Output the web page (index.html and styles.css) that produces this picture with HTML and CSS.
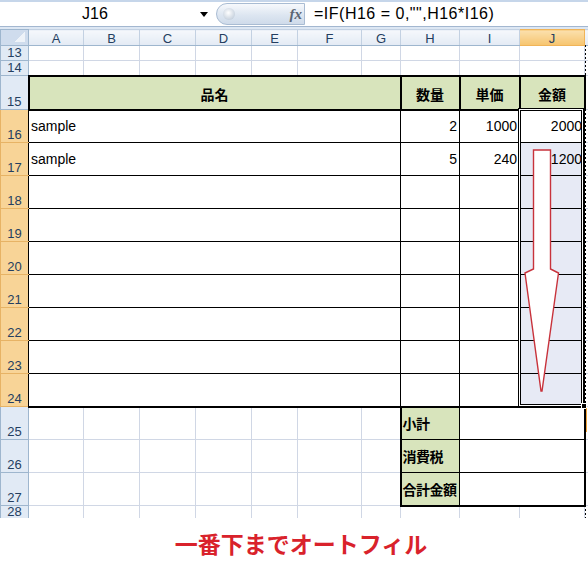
FILE: index.html
```html
<!DOCTYPE html>
<html lang="ja">
<head>
<meta charset="utf-8">
<title>オートフィル</title>
<link rel="stylesheet" href="styles.css">
</head>
<body>
<div class="fbar">
  <div class="namebox">J16</div>
  <div class="dd"></div>
  <div class="pill"><span class="knob"></span><span class="fx">fx</span></div>
  <div class="formula">=IF(H16 = 0,"",H16*I16)</div>
</div>
<div class="sheetwrap">
  <table class="sheet">
    <colgroup>
      <col class="c-rh"><col class="c-a"><col class="c-b"><col class="c-c"><col class="c-d"><col class="c-e"><col class="c-f"><col class="c-g"><col class="c-h"><col class="c-i"><col class="c-j"><col class="c-k">
    </colgroup>
    <tr class="r-head">
      <th class="corner"></th><th class="ch">A</th><th class="ch">B</th><th class="ch">C</th><th class="ch">D</th><th class="ch">E</th><th class="ch">F</th><th class="ch">G</th><th class="ch">H</th><th class="ch">I</th><th class="ch on">J</th><th class="ch"></th>
    </tr>
    <tr class="r-s">
      <th class="rh">13</th><td></td><td></td><td></td><td></td><td></td><td></td><td></td><td></td><td></td><td></td><td></td>
    </tr>
    <tr class="r-s">
      <th class="rh">14</th><td></td><td></td><td></td><td></td><td></td><td></td><td></td><td></td><td></td><td></td><td></td>
    </tr>
    <tr class="r-15">
      <th class="rh">15</th><td colspan="7" class="hd">品名</td><td class="hd">数量</td><td class="hd">単価</td><td class="hd">金額</td><td></td>
    </tr>
    <tr class="r-m">
      <th class="rh on">16</th><td colspan="7" class="bx name">sample</td><td class="bx num">2</td><td class="bx num">1000</td><td class="bx num">2000</td><td></td>
    </tr>
    <tr class="r-m">
      <th class="rh on">17</th><td colspan="7" class="bx name">sample</td><td class="bx num">5</td><td class="bx num">240</td><td class="bx num sel">1200</td><td></td>
    </tr>
    <tr class="r-m">
      <th class="rh on">18</th><td colspan="7" class="bx"></td><td class="bx"></td><td class="bx"></td><td class="bx sel"></td><td></td>
    </tr>
    <tr class="r-m">
      <th class="rh on">19</th><td colspan="7" class="bx"></td><td class="bx"></td><td class="bx"></td><td class="bx sel"></td><td></td>
    </tr>
    <tr class="r-m">
      <th class="rh on">20</th><td colspan="7" class="bx"></td><td class="bx"></td><td class="bx"></td><td class="bx sel"></td><td></td>
    </tr>
    <tr class="r-m">
      <th class="rh on">21</th><td colspan="7" class="bx"></td><td class="bx"></td><td class="bx"></td><td class="bx sel"></td><td></td>
    </tr>
    <tr class="r-m">
      <th class="rh on">22</th><td colspan="7" class="bx"></td><td class="bx"></td><td class="bx"></td><td class="bx sel"></td><td></td>
    </tr>
    <tr class="r-m">
      <th class="rh on">23</th><td colspan="7" class="bx"></td><td class="bx"></td><td class="bx"></td><td class="bx sel"></td><td></td>
    </tr>
    <tr class="r-m last">
      <th class="rh on">24</th><td colspan="7" class="bx"></td><td class="bx"></td><td class="bx"></td><td class="bx sel"></td><td></td>
    </tr>
    <tr class="r-m">
      <th class="rh">25</th><td></td><td></td><td></td><td></td><td></td><td></td><td></td><td class="lbl">小計</td><td colspan="2" class="tot"></td><td></td>
    </tr>
    <tr class="r-m">
      <th class="rh">26</th><td></td><td></td><td></td><td></td><td></td><td></td><td></td><td class="lbl">消費税</td><td colspan="2" class="tot"></td><td></td>
    </tr>
    <tr class="r-m end">
      <th class="rh">27</th><td></td><td></td><td></td><td></td><td></td><td></td><td></td><td class="lbl">合計金額</td><td colspan="2" class="tot"></td><td></td>
    </tr>
    <tr class="r-28">
      <th class="rh top">28</th><td></td><td></td><td></td><td></td><td></td><td></td><td></td><td></td><td></td><td></td><td></td>
    </tr>
  </table>
  <div class="pagebreak"></div>
  <div class="selbox"></div>
  <div class="handle"></div>
  <div class="tick"></div>
  <svg class="arrow" viewBox="0 29 588 491" width="588" height="491" xmlns="http://www.w3.org/2000/svg">
    <path d="M533.5 152 L550.5 152 L550.5 271 L558.5 275 L542 393 L541 393 L525 275 L533.5 271 Z" fill="#fff" stroke="#c8323b" stroke-width="1.4" stroke-linejoin="miter"/>
  </svg>
</div>
<div class="caption">一番下までオートフィル</div>
</body>
</html>
```
FILE: styles.css
```css
* { box-sizing: border-box; }
html, body { margin: 0; padding: 0; background: #fff; }
body {
  width: 588px;
  height: 573px;
  overflow: hidden;
  font-family: "Liberation Sans", "Noto Sans CJK JP", sans-serif;
  color: #000;
}

/* formula bar */
.fbar {
  display: flex;
  align-items: center;
  height: 27px;
  border-top: 2px solid #c6d6ea;
  border-bottom: 1px solid #a3b7d0;
  background: #fff;
}
.namebox {
  width: 190px;
  text-align: center;
  font-size: 16px;
  line-height: 24px;
}
.dd {
  margin-left: 10px;
  width: 0;
  height: 0;
  border-left: 4px solid transparent;
  border-right: 4px solid transparent;
  border-top: 5px solid #000;
}
.pill {
  margin-left: 8px;
  width: 89px;
  height: 22px;
  display: flex;
  align-items: center;
  justify-content: space-between;
  padding: 0 2px 0 6px;
  border: 1px solid #a9bcd3;
  border-radius: 11px 0 0 11px;
  background: linear-gradient(#f7f9fc, #dde6f1 55%, #cfdbea);
}
.knob {
  width: 12px;
  height: 12px;
  border-radius: 50%;
  background: radial-gradient(circle at 45% 40%, #ffffff, #c9d3df 70%, #aab6c5);
}
.fx {
  font-family: "Liberation Serif", serif;
  font-style: italic;
  font-weight: bold;
  font-size: 15px;
  color: #5b6573;
  line-height: 20px;
}
.formula {
  padding-left: 9px;
  font-size: 16px;
  letter-spacing: 0.5px;
  line-height: 24px;
  white-space: nowrap;
}

/* sheet */
.sheetwrap {
  position: relative;
  height: 491px;
  overflow: hidden;
  border-top: 2px solid #dde7f3;
}
.sheet {
  border-collapse: collapse;
  table-layout: fixed;
  width: 614px;
  font-size: 14px;
}
.c-rh { width: 28px; }
.c-a { width: 55px; }
.c-b { width: 56px; }
.c-c { width: 56px; }
.c-d { width: 56px; }
.c-e { width: 46px; }
.c-f { width: 64px; }
.c-g { width: 39px; }
.c-h { width: 59px; }
.c-i { width: 60px; }
.c-j { width: 65px; }
.c-k { width: 30px; }

.sheet td {
  border: 1px solid #d0d7e5;
  padding: 0;
  white-space: nowrap;
  overflow: hidden;
}
.r-head { height: 16px; }
.r-s { height: 15px; }
.r-15 { height: 34px; }
.r-m { height: 33px; }
.r-28 { height: 14px; }

.corner {
  border: 1px solid #9eb6ce;
  background: linear-gradient(135deg, transparent 50%, #eef3f9 50%) right 3px bottom 3px / 10px 10px no-repeat, #cfdced;
}
.ch {
  border: 1px solid #c3d1e2;
  border-bottom-color: #9eb6ce;
  background: linear-gradient(#f5f8fc, #e3eaf4);
  font-weight: normal;
  font-size: 13px;
  color: #243e60;
  padding: 2px 0 0;
  line-height: 13px;
  text-align: center;
}
.ch.on {
  background: linear-gradient(#fbe0ad, #f6c46e);
  border-color: #f0b458;
}
.rh {
  border: 1px solid #9eb6ce;
  background: #e1eaf5;
  font-weight: normal;
  font-size: 13px;
  color: #243e60;
  text-align: center;
  vertical-align: bottom;
  line-height: 13px;
  padding: 0 0 1px;
}
.rh.top {
  vertical-align: top;
  padding: 0;
  line-height: 12px;
}
.rh.on {
  background: #f8d497;
  border-color: #e7b365;
  border-right-color: #000;
}

.hd {
  background: #d8e4bc;
  border: 2px solid #000 !important;
  font-weight: bold;
  text-align: center;
  font-family: "Noto Sans CJK JP", sans-serif;
  font-size: 14px;
  padding-top: 3px !important;
}
.bx { border: 1px solid #000 !important; }
.last .bx { border-bottom: 2px solid #000 !important; }
.name { padding-left: 2px !important; }
.num { text-align: right; padding-right: 2px !important; }
.sel { background: #e7eaf5; }
.lbl {
  background: #d8e4bc;
  border: 1px solid #000 !important;
  border-left: 2px solid #000 !important;
  font-family: "Noto Sans CJK JP", sans-serif;
  font-weight: bold;
  font-size: 14px;
  padding-left: 1px !important;
  letter-spacing: -0.5px;
}
.tot {
  border: 1px solid #000 !important;
  border-right: 2px solid #000 !important;
}
.end .lbl, .end .tot { border-bottom: 2px solid #000 !important; }

/* overlays */
.pagebreak {
  position: absolute;
  left: 585px;
  top: 16px;
  width: 1px;
  height: 475px;
  background: repeating-linear-gradient(#000 0 2px, transparent 2px 4px);
}
.selbox {
  position: absolute;
  left: 518px;
  top: 79px;
  width: 66px;
  height: 299px;
  border: 1px solid #000;
  box-shadow: inset 0 0 0 1px #fff, inset 0 0 0 2px #000;
}
.handle {
  position: absolute;
  left: 581px;
  top: 374px;
  width: 6px;
  height: 6px;
  background: #000;
  border: 1px solid #fff;
}
.tick {
  position: absolute;
  left: 586px;
  top: 379px;
  width: 1px;
  height: 24px;
  background: #f2a53c;
}
.arrow {
  position: absolute;
  left: 0;
  top: -2px;
}

.caption {
  padding: 9px 0 0 14px;
  text-align: center;
  font-family: "Noto Sans CJK JP", sans-serif;
  font-weight: bold;
  font-size: 23px;
  line-height: 32px;
  color: #d9222b;
}
```
